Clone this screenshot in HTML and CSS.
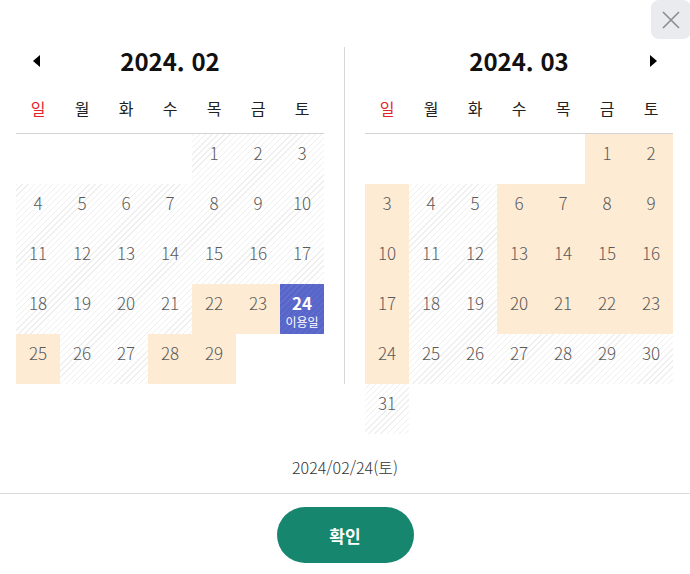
FILE: index.html
```html
<!DOCTYPE html>
<html lang="ko">
<head>
  <meta charset="UTF-8">
  <title>이용일 선택</title>
  <meta name="viewport" content="width=device-width,initial-scale=1">
  <link rel="stylesheet" href="styles.css">
</head>
<body>
  <div class="modal">
    <button class="close" type="button" aria-label="닫기">
      <svg width="18" height="18" viewBox="0 0 18 18"><path d="M1 1L17 17M17 1L1 17" stroke="#8a8c90" stroke-width="1.6" fill="none"/></svg>
    </button>
    <div class="cals">
      <section class="cal cal-left">
        <div class="cal-head">
          <span class="arrow prev"></span>
          <h2>2024. 02</h2>
          <span></span>
        </div>
        <div class="week">
          <span class="sun">일</span><span>월</span><span>화</span><span>수</span><span>목</span><span>금</span><span>토</span>
        </div>
        <div class="days">
          <span></span><span></span><span></span><span></span>
          <span class="off">1</span><span class="off">2</span><span class="off">3</span>
          <span class="off">4</span><span class="off">5</span><span class="off">6</span><span class="off">7</span><span class="off">8</span><span class="off">9</span><span class="off">10</span>
          <span class="off">11</span><span class="off">12</span><span class="off">13</span><span class="off">14</span><span class="off">15</span><span class="off">16</span><span class="off">17</span>
          <span class="off">18</span><span class="off">19</span><span class="off">20</span><span class="off">21</span><span class="on">22</span><span class="on">23</span><span class="sel">24<small>이용일</small></span>
          <span class="on">25</span><span class="off">26</span><span class="off">27</span><span class="on">28</span><span class="on">29</span>
        </div>
      </section>
      <section class="cal cal-right">
        <div class="cal-head">
          <span></span>
          <h2>2024. 03</h2>
          <span class="arrow next"></span>
        </div>
        <div class="week">
          <span class="sun">일</span><span>월</span><span>화</span><span>수</span><span>목</span><span>금</span><span>토</span>
        </div>
        <div class="days">
          <span></span><span></span><span></span><span></span><span></span>
          <span class="on">1</span><span class="on">2</span>
          <span class="on">3</span><span class="off">4</span><span class="off">5</span><span class="on">6</span><span class="on">7</span><span class="on">8</span><span class="on">9</span>
          <span class="on">10</span><span class="off">11</span><span class="off">12</span><span class="on">13</span><span class="on">14</span><span class="on">15</span><span class="on">16</span>
          <span class="on">17</span><span class="off">18</span><span class="off">19</span><span class="on">20</span><span class="on">21</span><span class="on">22</span><span class="on">23</span>
          <span class="on">24</span><span class="off">25</span><span class="off">26</span><span class="off">27</span><span class="off">28</span><span class="off">29</span><span class="off">30</span>
          <span class="off">31</span>
        </div>
      </section>
    </div>
    <p class="picked">2024/02/24(토)</p>
    <div class="foot">
      <button class="ok" type="button">확인</button>
    </div>
  </div>
</body>
</html>
```

FILE: styles.css
```css
body { margin: 0; padding: 0; background: #fff; font-family: "Noto Sans CJK KR", "Noto Sans", sans-serif; color: #222; }
.modal { position: relative; width: 690px; height: 574px; overflow: hidden; }
.close { position: absolute; top: 0; right: -1px; width: 40px; height: 39px; border: none; border-radius: 8px; background: #e9ebef; display: flex; align-items: center; justify-content: center; padding: 0; cursor: pointer; }

.cals { display: flex; align-items: flex-start; padding: 47px 16px 0; }
.cal { width: 308px; }
.cal-left { padding-right: 20px; border-right: 1px solid #d6d6d6; }
.cal-right { margin-left: 20px; }

.cal-head { display: grid; grid-template-columns: 1fr auto 1fr; align-items: center; height: 28px; }
.cal-head h2 { margin: 0; font-size: 24px; line-height: 28px; font-weight: 700; color: #111; }
.arrow { width: 0; height: 0; border-top: 6px solid transparent; border-bottom: 6px solid transparent; }
.prev { justify-self: start; margin-left: 17px; border-right: 7px solid #000; }
.next { justify-self: end; margin-right: 16px; border-left: 7px solid #000; }

.week { display: grid; grid-template-columns: repeat(7, 44px); padding: 20px 0 12px; border-bottom: 1px solid #d3d3d3; }
.week span { text-align: center; font-size: 16px; line-height: 26px; color: #222; }
.week .sun { color: #e3262b; }

.days { display: grid; grid-template-columns: repeat(7, 44px); grid-auto-rows: 50px; }
.days span { display: flex; flex-direction: column; align-items: center; padding-top: 9px; box-sizing: border-box; font-size: 17px; line-height: 20px; font-weight: 300; color: #5a5a5a; }
.days .off { background: repeating-linear-gradient(-45deg, #fff 0, #fff 3.4px, #efefef 3.4px, #efefef 4.3px) fixed; }
.days .on { background: #feebd4; }
.days .sel { background: repeating-linear-gradient(-45deg, #5966c9 0, #5966c9 3.4px, #6471ce 3.4px, #6471ce 4.3px) fixed; color: #fff; font-weight: 700; }
.days .sel small { margin-top: 2px; font-size: 12px; line-height: 14px; font-weight: 400; }

.picked { margin: 0; padding: 22px 0 15px; text-align: center; font-size: 16px; line-height: 22px; font-weight: 300; color: #333; }
.foot { border-top: 1px solid #dcdcdc; padding-top: 13px; display: flex; justify-content: center; }
.ok { width: 137px; height: 56px; border: none; border-radius: 28px; background: #17866f; color: #fff; font-family: inherit; font-size: 17px; font-weight: 700; cursor: pointer; }
```
